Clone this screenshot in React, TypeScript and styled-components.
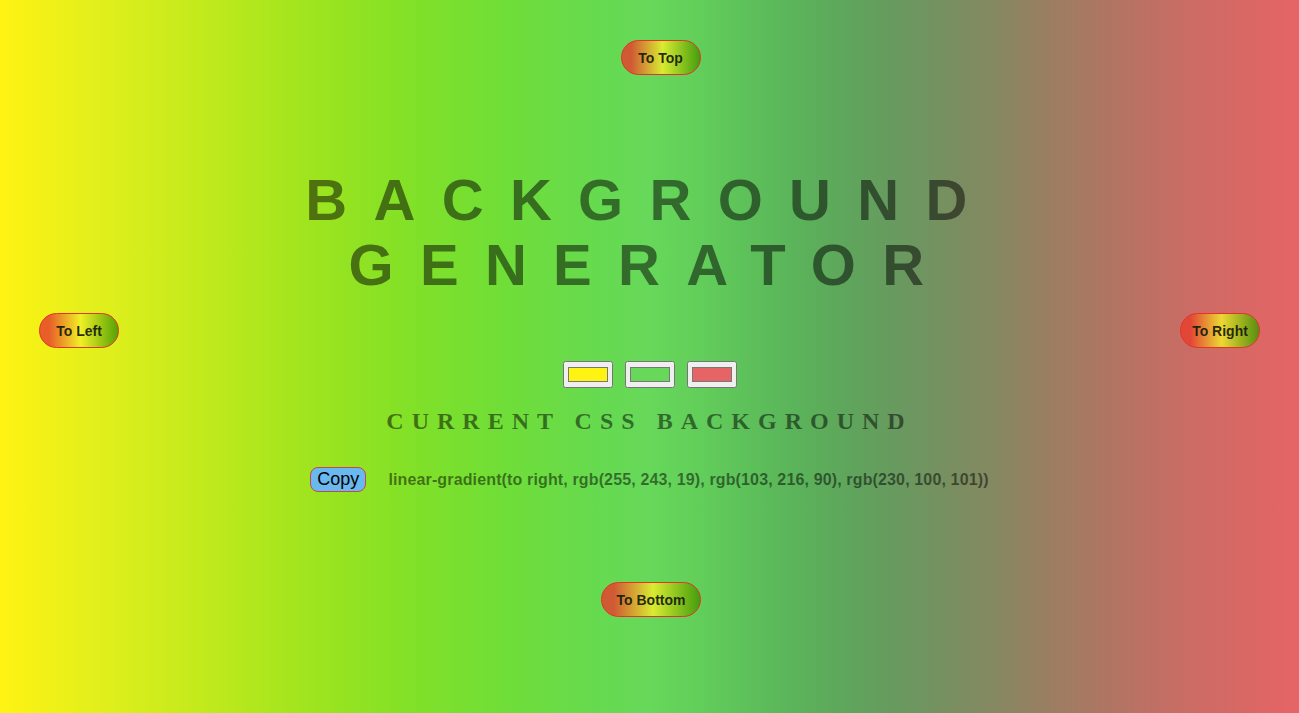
import React, { useState } from "react";
import styled, { createGlobalStyle } from "styled-components";

const Global = createGlobalStyle`
  html, body { margin: 0; padding: 0; }
  body { font-family: "Liberation Sans", Arial, sans-serif; }
`;

const Page = styled.div<{ $bg: string }>`
  min-height: 713px;
  box-sizing: border-box;
  background: ${(p) => p.$bg};
  padding-top: 40px;
  display: flex;
  flex-direction: column;
`;

const EdgeRow = styled.div<{ $shift: number; $gap: number }>`
  display: flex;
  justify-content: center;
  padding-left: ${(p) => p.$shift}px;
  margin-top: ${(p) => p.$gap}px;
`;

const DirButton = styled.button<{ $w: number }>`
  height: 35px;
  width: ${(p) => p.$w}px;
  padding: 0;
  box-sizing: border-box;
  border: 1px solid rgb(226, 52, 40);
  border-radius: 18px;
  background: linear-gradient(
    to right,
    rgba(231, 62, 44, 0.82) 12%,
    rgba(242, 240, 40, 0.82) 52%,
    rgba(62, 150, 0, 0.85) 100%
  );
  font-family: "Liberation Sans", Arial, sans-serif;
  font-weight: 700;
  font-size: 14px;
  color: rgba(20, 25, 10, 0.92);
  cursor: pointer;
`;

const Middle = styled.div`
  display: grid;
  grid-template-columns: auto 1fr auto;
  align-items: center;
  padding: 0 39px;
  margin-top: 92px;
`;

const Center = styled.div`
  display: flex;
  flex-direction: column;
  align-items: center;
  padding-bottom: 2px;
`;

const Title = styled.h1`
  margin: 0;
  font-family: "Liberation Sans", Arial, sans-serif;
  font-weight: 700;
  font-size: 58px;
  line-height: 65px;
  letter-spacing: 26.3px;
  text-align: center;
  color: rgba(0, 0, 0, 0.5);
`;

const Swatches = styled.div`
  display: flex;
  gap: 12px;
  margin-top: 64px;
`;

const ColorInput = styled.input`
  width: 50px;
  height: 27px;
  margin: 0;
`;

const Subtitle = styled.h3`
  margin: 19px 0 0;
  font-family: "Liberation Serif", "Times New Roman", serif;
  font-weight: 700;
  font-size: 24px;
  line-height: 28px;
  letter-spacing: 8px;
  color: rgba(0, 0, 0, 0.5);
`;

const CopyRow = styled.div`
  display: flex;
  align-items: center;
  gap: 22px;
  margin-top: 32px;
`;

const CopyButton = styled.button`
  height: 25px;
  padding: 0 6px;
  box-sizing: border-box;
  border: 1px solid rgb(200, 70, 80);
  border-radius: 8px;
  background: rgb(106, 184, 240);
  font-family: "Liberation Sans", Arial, sans-serif;
  font-size: 18px;
  color: #000;
  cursor: pointer;
`;

const CssText = styled.span`
  font-family: "Liberation Sans", Arial, sans-serif;
  font-weight: 700;
  font-size: 16px;
  letter-spacing: 0.14px;
  color: rgba(0, 0, 0, 0.5);
`;

const INITIAL = ["#fff313", "#67d85a", "#e66465"];

/* how the reference renders the initial three-stop gradient */
const RENDERED_STOPS: [number, number, number, number][] = [
  [0, 255, 243, 19],
  [7.7, 225, 239, 28],
  [15.4, 195, 234, 28],
  [23.1, 162, 229, 30],
  [30.8, 132, 225, 38],
  [38.5, 112, 222, 55],
  [46.2, 102, 218, 80],
  [50, 103, 216, 90],
  [53.9, 98, 206, 90],
  [57.7, 93, 192, 90],
  [61.6, 91, 178, 90],
  [65.4, 95, 165, 92],
  [69.3, 105, 153, 95],
  [73.1, 120, 143, 96],
  [77, 135, 135, 97],
  [80.8, 155, 126, 98],
  [84.7, 173, 118, 99],
  [88.5, 190, 112, 100],
  [92.4, 206, 107, 100],
  [100, 230, 100, 101],
];

function hexToRgb(h: string) {
  const n = parseInt(h.slice(1), 16);
  return `rgb(${(n >> 16) & 255}, ${(n >> 8) & 255}, ${n & 255})`;
}

export default function App() {
  const [colors, setColors] = useState(INITIAL);
  const [dir, setDir] = useState("to right");
  const cssText = `linear-gradient(${dir}, ${colors.map(hexToRgb).join(", ")})`;
  const isInitial = colors.every((c, i) => c === INITIAL[i]);
  const bg = isInitial
    ? `linear-gradient(${dir}, ${RENDERED_STOPS.map(
        ([p, r, g, b]) => `rgb(${r}, ${g}, ${b}) ${p}%`
      ).join(", ")})`
    : cssText;
  const setColor = (i: number, v: string) =>
    setColors((c) => c.map((x, j) => (j === i ? v : x)));

  return (
    <>
      <Global />
      <Page $bg={bg}>
        <EdgeRow $shift={22} $gap={0}>
          <DirButton $w={80} onClick={() => setDir("to top")}>To Top</DirButton>
        </EdgeRow>
        <Middle>
          <DirButton $w={80} onClick={() => setDir("to left")}>To Left</DirButton>
          <Center>
            <Title>
              BACKGROUND
              <br />
              GENERATOR
            </Title>
            <Swatches>
              {colors.map((c, i) => (
                <ColorInput
                  key={i}
                  type="color"
                  value={c}
                  onChange={(e) => setColor(i, e.target.value)}
                />
              ))}
            </Swatches>
            <Subtitle>CURRENT CSS BACKGROUND</Subtitle>
            <CopyRow>
              <CopyButton onClick={() => navigator.clipboard?.writeText(cssText)}>Copy</CopyButton>
              <CssText>{cssText}</CssText>
            </CopyRow>
          </Center>
          <DirButton $w={80} onClick={() => setDir("to right")}>To Right</DirButton>
        </Middle>
        <EdgeRow $shift={3} $gap={88}>
          <DirButton $w={100} onClick={() => setDir("to bottom")}>To Bottom</DirButton>
        </EdgeRow>
      </Page>
    </>
  );
}
